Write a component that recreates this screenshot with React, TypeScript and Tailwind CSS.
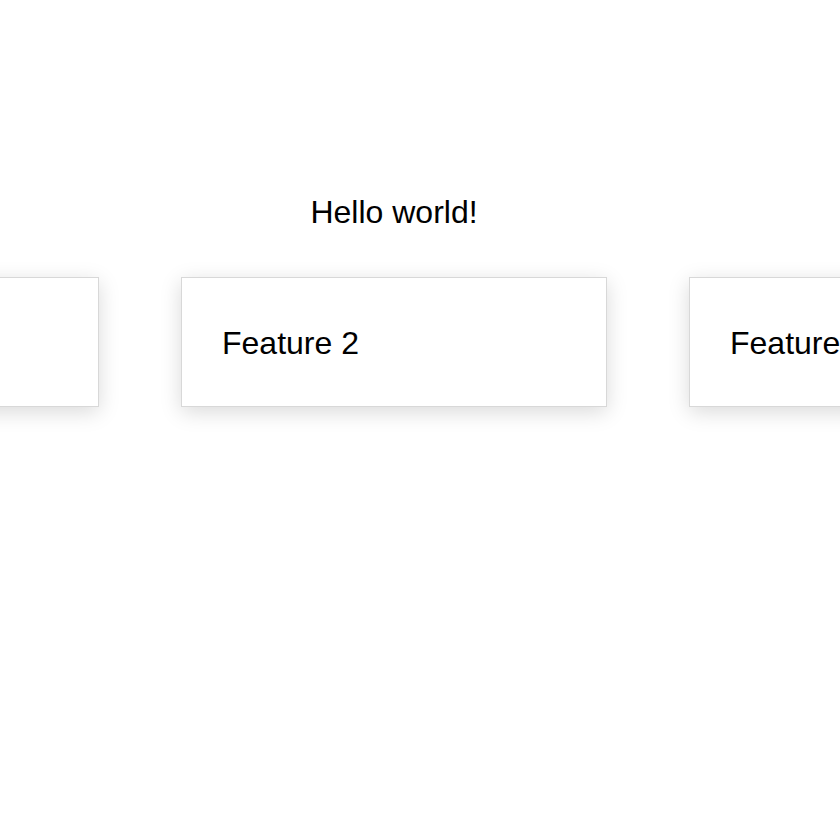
import React from "react";

const features = ["Feature 1", "Feature 2", "Feature 3"];

export default function App() {
    return (
        <div className="min-h-screen w-full overflow-hidden bg-white text-black font-['Liberation_Sans',Arial,sans-serif]">
            {/* --- HEADING --- */}
            <div className="pt-[194px] pr-[52px] text-center">
                <h1 className="text-[32px] leading-[37px] font-normal">Hello world!</h1>
            </div>

            {/* --- FEATURE STRIP --- */}
            <div className="mt-[46px] flex gap-[82px] ml-[-327px] pb-10">
                {features.map((f) => (
                    <div
                        key={f}
                        className="w-[426px] shrink-0 border border-[#d8d8d8] bg-white pl-[40px] pt-[47px] pb-[44px] shadow-[0_5px_20px_rgba(0,0,0,0.15)]"
                    >
                        <p className="text-[32px] leading-[37px] whitespace-nowrap">{f}</p>
                    </div>
                ))}
            </div>
        </div>
    );
}
